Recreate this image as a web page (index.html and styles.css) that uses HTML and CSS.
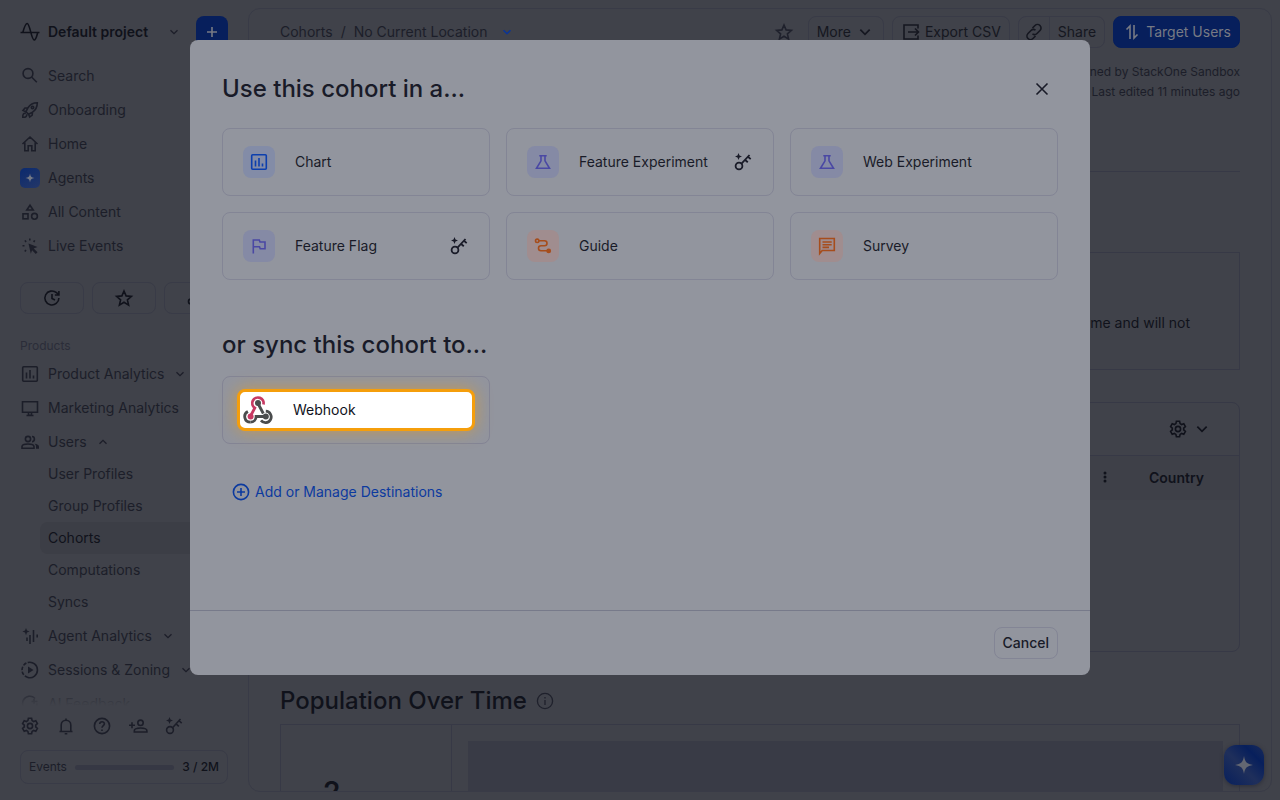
FILE: index.html
```html
<!DOCTYPE html>
<html lang="en">
<head>
    <meta charset="UTF-8">
    <meta name="viewport" content="width=device-width, initial-scale=1.0">
    <title>No Current Location - Cohorts</title>
    <link rel="stylesheet" href="styles.css">
</head>
<body>
    <!-- Shared icons -->
    <svg class="sprite" aria-hidden="true">
        <symbol id="chevron" viewBox="0 0 12 12"><path d="M2.5 4.2 6 7.7l3.500-3.500"/></symbol>
        <symbol id="chart" viewBox="0 0 20 20"><rect x="2.700" y="2.700" width="14.600" height="14.600" rx="1"/><path d="M6.500 8.500v6M10 6v8.500M13.500 11.500v3"/></symbol>
        <symbol id="flask" viewBox="0 0 20 20"><path d="M6.300 3.700h7.400M8 4v4.800L3.500 16.300h13L12 8.800V4"/></symbol>
        <symbol id="key" viewBox="0 0 20 20"><circle cx="6" cy="14" r="3.400"/><path d="M8.500 11.700 16.500 3M14.700 4.500l3 2.600M11.800 7.700l3 2.600"/><path class="solid" d="m5.500 1 1 2.500 2.500 1-2.500 1-1 2.500-1-2.500-2.500-1 2.500-1z"/></symbol>
        <symbol id="gear" viewBox="0 0 20 20"><path d="M8.400 2.300h3.200l.5 2.300 1.500.9 2.200-.8 1.600 2.800-1.700 1.600v1.800l1.700 1.600-1.600 2.800-2.200-.8-1.500.9-.5 2.300H8.400l-.5-2.300-1.500-.9-2.200.8-1.600-2.800 1.700-1.600V9.100L2.600 7.500l1.600-2.800 2.200.8 1.500-.9z"/><circle cx="10" cy="10" r="2.600"/></symbol>
        <symbol id="star" viewBox="0 0 20 20"><path d="m10 3 2.100 4.900 5.300.5-4 3.500 1.200 5.200-4.600-2.800-4.600 2.800 1.200-5.200-4-3.500 5.300-.5z"/></symbol>
        <symbol id="spark" viewBox="0 0 20 20"><path class="solid" d="M10 1c.9 6 2.900 8.100 9 9-6.100.9-8.100 3-9 9-.9-6-2.900-8.100-9-9 6.100-.9 8.100-3 9-9z"/></symbol>
    </svg>

    <div class="app">
        <aside class="sidebar">
            <div class="project">
                <button class="project-name">
                    <svg class="icon" viewBox="0 0 20 20"><path d="M.5 10.500h19M2.800 10.500C4.300 5 5.500 1.500 7.200 1.500c2.700 0 4.200 16.500 7 16.500 1.700 0 2.600-4 3.400-7"/></svg>
                    <span>Default project</span>
                    <svg class="chev"><use href="#chevron"/></svg>
                </button>
                <button class="add" aria-label="Create">
                    <svg class="icon-sm" viewBox="0 0 16 16"><path d="M8 3v10M3 8h10"/></svg>
                </button>
            </div>

            <nav class="nav">
                <a href="#"><svg class="icon" viewBox="0 0 20 20"><circle cx="8" cy="7.500" r="4.900"/><path d="m11.800 11.300 5 5"/></svg>Search</a>
                <a href="#"><svg class="icon" viewBox="0 0 20 20"><path d="M17.300 2.700c-4 0-7 1.400-9.300 5l-2 4 2.500 2.500 4-2c3.500-2.500 4.800-5.500 4.800-9.500zM8 7.700l-3 .2-2 2.500 3 1.300M12.500 12l-.3 3-2.500 2-1.200-3M5.800 13.500c-2-.8-3.300 1-3 3.800 2.800.2 4.500-1 3.800-3"/><circle cx="12.500" cy="7.500" r="1.200"/></svg>Onboarding</a>
                <a href="#"><svg class="icon" viewBox="0 0 20 20"><path d="M2.500 10 10 3l7.500 7M4.800 8.500v8.200h3.400v-5h3.600v5h3.400V8.500"/></svg>Home</a>
                <a href="#"><span class="agent-badge"><svg><use href="#spark"/></svg></span>Agents</a>
                <a href="#"><svg class="icon" viewBox="0 0 20 20"><path d="M10 3.200 13.200 8H6.800z"/><rect x="3" y="11.800" width="5" height="5"/><circle cx="14.500" cy="14.300" r="2.900"/></svg>All Content</a>
                <a href="#"><svg class="icon" viewBox="0 0 20 20"><path class="solid" d="m8.500 7.500 9 3.500-3.800 1.500 3.800 3.700-1.700 1.800-3.700-3.800-1.300 3.500z"/><path d="M9.800 2.500v2M5 4.300l1 1.700M14.700 4.300l-1 1.700M2.500 9.800h2M4.800 15.500 6 14"/></svg>Live Events</a>
            </nav>

            <div class="quick">
                <button aria-label="Recent"><svg class="icon" viewBox="0 0 20 20"><path d="M16.900 10A7 7 0 1 1 14.500 4.700l2 1.800M16.900 3v4h-4M10 6v4.500l3 1.500"/></svg></button>
                <button aria-label="Favorites"><svg class="icon"><use href="#star"/></svg></button>
                <button aria-label="Owned by me"><svg class="icon" viewBox="0 0 20 20"><circle cx="5" cy="13.500" r="2.500"/><circle cx="12" cy="6" r="2.500"/></svg></button>
            </div>

            <div class="products">
                <div class="label">Products</div>
                <nav class="nav">
                    <a href="#"><svg class="icon"><use href="#chart"/></svg>Product Analytics<svg class="chev"><use href="#chevron"/></svg></a>
                    <a href="#"><svg class="icon" viewBox="0 0 20 20"><path d="M2.500 3.700h15v10.500h-15zM8.500 14.500v2.800h3v-2.800M6.500 17.500h7"/></svg>Marketing Analytics</a>
                    <a href="#"><svg class="icon" viewBox="0 0 20 20"><circle cx="8" cy="7" r="2.600"/><path d="M2 16.200v-1.600c0-1.700 3.400-2.600 6-2.600s6 .9 6 2.600v1.600zM12 4.500c3.200 0 3.200 5.200 0 5.200"/><path class="solid" d="M14.500 11.800c2.600.3 4.500 1.300 4.500 3v2h-3v-2.500c0-1-.6-1.800-1.500-2.500z"/></svg>Users<svg class="chev up"><use href="#chevron"/></svg></a>
                    <div class="subnav">
                        <a href="#">User Profiles</a>
                        <a href="#">Group Profiles</a>
                        <a href="#" class="active">Cohorts</a>
                        <a href="#">Computations</a>
                        <a href="#">Syncs</a>
                    </div>
                    <a href="#"><svg class="icon" viewBox="0 0 20 20"><path d="M7 11.500v3.500M10 9v9M13.500 4v12M17.200 8.500v3"/><path class="solid" d="m6 2 1 2.600 2.600 1-2.600 1L6 9.200l-1-2.600-2.600-1 2.600-1z"/></svg>Agent Analytics<svg class="chev"><use href="#chevron"/></svg></a>
                    <a href="#"><svg class="icon" viewBox="0 0 20 20"><path d="M8 2.500a7.700 7.700 0 1 1 0 15"/><path stroke-dasharray="3.500 1.500" d="M8 17.500a7.700 7.700 0 0 1 0-15"/><path class="solid" d="m8 6.500 5.500 3.500L8 13.500z"/></svg>Sessions &amp; Zoning<svg class="chev"><use href="#chevron"/></svg></a>
                    <a href="#"><svg class="icon" viewBox="0 0 20 20"><path d="M15 4.500a7.200 7.200 0 1 0 2 5M14 5v5M11.500 7.500h6"/></svg>AI Feedback</a>
                </nav>
            </div>

            <div class="tools">
                <button aria-label="Settings"><svg class="icon"><use href="#gear"/></svg></button>
                <button aria-label="Notifications"><svg class="icon" viewBox="0 0 20 20"><path d="M3.500 15.500h13M5.200 15.500V9a4.800 4.800 0 0 1 9.600 0v6.500M10 2.500v2M8.700 17.700h2.600"/></svg></button>
                <button aria-label="Help"><svg class="icon" viewBox="0 0 20 20"><circle cx="10" cy="10" r="7.600"/><path d="M7.700 8c.2-3.200 4.800-2.800 4.700-.2 0 1.700-2.400 1.900-2.400 4M10 13.400V15"/></svg></button>
                <button aria-label="Invite"><svg class="icon" viewBox="0 0 20 20"><circle cx="12.500" cy="6.800" r="2.700"/><path d="M6.300 16v-1.300c0-3.600 12.600-3.600 12.600 0V16zM4 6.200v6M1 9.200h6"/></svg></button>
                <button aria-label="Upgrade"><svg class="icon"><use href="#key"/></svg></button>
            </div>

            <div class="usage">
                <span>Events</span>
                <span class="usage-bar"></span>
                <span class="usage-count">3 / 2M</span>
            </div>
        </aside>

        <main class="panel">
            <div class="topbar">
                <div class="crumbs">
                    <a href="#">Cohorts</a><span>/</span><a href="#">No Current Location</a>
                    <svg class="chev blue"><use href="#chevron"/></svg>
                </div>
                <div class="actions">
                    <button class="plain" aria-label="Favorite"><svg class="icon"><use href="#star"/></svg></button>
                    <button class="btn">More <svg class="chev-lg"><use href="#chevron"/></svg></button>
                    <button class="btn"><svg class="icon" viewBox="0 0 20 20"><path d="M17 6.500V3H3v14h14v-3.500M7 10h10M14 6.500l3.500 3.500-3.500 3.500"/></svg>Export CSV</button>
                    <div class="split">
                        <button aria-label="Copy link"><svg class="icon" viewBox="0 0 20 20"><path d="m8.500 6 2.500-2.500a3.400 3.400 0 0 1 5 5L13 11.500a3.400 3.400 0 0 1-4.500.3M11.500 14 9 16.500a3.400 3.400 0 0 1-5-5L7 8.500a3.400 3.400 0 0 1 4.500-.3"/></svg></button>
                        <button>Share</button>
                    </div>
                    <button class="btn primary"><svg class="icon" viewBox="0 0 20 20"><path d="M8 17V4L4.500 7.500M12 3v13l3.500-3.500"/></svg>Target Users</button>
                </div>
            </div>

            <div class="meta">
                <div>Owned by StackOne Sandbox</div>
                <div>Last edited 11 minutes ago</div>
            </div>

            <div class="notice">This cohort is static: it was captured at one time and will not</div>

            <section class="members">
                <div class="members-bar">
                    <button aria-label="Table settings"><svg class="icon"><use href="#gear"/></svg><svg class="chev-lg"><use href="#chevron"/></svg></button>
                </div>
                <table>
                    <thead>
                        <tr>
                            <th><svg class="dots" viewBox="0 0 4 12"><circle cx="2" cy="2" r="1.500"/><circle cx="2" cy="6" r="1.500"/><circle cx="2" cy="10" r="1.500"/></svg></th>
                            <th class="country">Country</th>
                        </tr>
                    </thead>
                </table>
            </section>

            <h2>Population Over Time <svg class="icon" viewBox="0 0 20 20"><circle cx="10" cy="10" r="7.600"/><path d="M10 9v5M10 6v1.500"/></svg></h2>
            <section class="population">
                <div class="count">2</div>
                <div class="plot"></div>
            </section>
        </main>
    </div>

    <button class="assistant" aria-label="Ask the assistant"><svg><use href="#spark"/></svg></button>

    <div class="overlay">
        <div class="modal" role="dialog" aria-labelledby="modal-title">
            <div class="modal-body">
                <div class="modal-head">
                    <h2 id="modal-title">Use this cohort in a...</h2>
                    <button aria-label="Close"><svg class="icon" viewBox="0 0 20 20"><path d="m4.500 4.500 11 11M15.500 4.500l-11 11"/></svg></button>
                </div>
                <div class="cards">
                    <button class="card"><span class="tile blue"><svg class="icon"><use href="#chart"/></svg></span>Chart</button>
                    <button class="card"><span class="tile violet"><svg class="icon"><use href="#flask"/></svg></span>Feature Experiment<svg class="icon key"><use href="#key"/></svg></button>
                    <button class="card"><span class="tile violet"><svg class="icon"><use href="#flask"/></svg></span>Web Experiment</button>
                    <button class="card"><span class="tile violet"><svg class="icon" viewBox="0 0 20 20"><path d="M4.300 17.500V4h6l.7 2h5v6.800h-4.800l-.7-2H4.500"/></svg></span>Feature Flag<svg class="icon key"><use href="#key"/></svg></button>
                    <button class="card"><span class="tile orange"><svg class="icon" viewBox="0 0 20 20"><circle cx="4.200" cy="4.800" r="1.700"/><path d="M6 4.800h5.500a2.500 2.500 0 0 1 0 5H8a2.500 2.500 0 0 0 0 5h6"/><circle class="solid" cx="15.700" cy="14.900" r="2.400"/></svg></span>Guide</button>
                    <button class="card"><span class="tile orange"><svg class="icon" viewBox="0 0 20 20"><path d="M2.700 17.500v-15h14.600v12H5.200zM5.500 6h9.200M5.500 8.700h9.200M5.500 11.400h6.500"/></svg></span>Survey</button>
                </div>

                <h2>or sync this cohort to...</h2>
                <div class="cards">
                    <button class="card sync">
                        <span class="spotlight">
                            <svg class="webhook" viewBox="0 0 30 30">
                                <path class="gray" d="M15 8.500 20.300 18.500M22.800 16.200a5.700 5.700 0 1 1-4.800 9.200M7.500 27.200a5.700 5.700 0 0 0 5.600-5.700h9"/>
                                <path class="gray" d="M7.500 27.200A5.700 5.700 0 0 1 4.900 16.400"/>
                                <path class="pink" d="M20.500 9.500A5.700 5.700 0 1 0 11.800 13L7.800 20.500"/>
                                <circle class="fill-gray" cx="15" cy="8" r="3"/>
                                <circle class="fill-pink" cx="7.600" cy="21.500" r="3"/>
                                <circle class="fill-gray" cx="22.800" cy="21.500" r="3"/>
                            </svg>
                            Webhook
                        </span>
                    </button>
                </div>
                <a href="#" class="manage"><svg class="icon" viewBox="0 0 20 20"><circle cx="10" cy="10" r="7.600"/><path d="M10 6v8M6 10h8"/></svg>Add or Manage Destinations</a>
            </div>
            <div class="modal-foot"><button class="cancel">Cancel</button></div>
        </div>
    </div>
</body>
</html>
```
FILE: styles.css
```css
* { box-sizing: border-box; }
body { font-family: Inter, sans-serif; font-size: 14px; line-height: 20px; font-weight: 400; margin: 0; background-color: #40424a; color: #1c1e29; overflow: hidden; }
button { font: inherit; color: inherit; background: none; border: none; padding: 0; cursor: pointer; }
a { color: inherit; text-decoration: none; }
h2 { margin: 0; font-size: 24px; line-height: 32px; font-weight: 500; }

/* icons */
svg { fill: none; stroke: currentColor; stroke-width: 1.6; flex: none; }
.sprite { position: absolute; width: 0; height: 0; }
.solid { fill: currentColor; stroke: none; }
.icon { width: 20px; height: 20px; }
.icon-sm { width: 16px; height: 16px; }
.chev { width: 12px; height: 12px; stroke-width: 1.3; }
.chev-lg { width: 20px; height: 16px; stroke-width: 1.3; }
.up { transform: rotate(180deg); }
.blue { color: #0b3596; }

.app { display: flex; height: 100vh; }

/* sidebar */
.sidebar { width: 248px; flex: none; display: flex; flex-direction: column; padding: 16px 20px; }
.project { display: flex; justify-content: space-between; gap: 16px; margin-bottom: 11px; }
.project-name { display: flex; flex: 1; align-items: center; gap: 8px; color: #10121b; font-weight: 600; }
.project-name .chev { margin-left: auto; color: #1c1e29; }
.add { display: flex; align-items: center; justify-content: center; width: 32px; height: 32px; border-radius: 8px; background: #071f5c; color: #777a84; }
.nav a { display: flex; align-items: center; gap: 8px; height: 34px; white-space: nowrap; }
.nav .chev { margin-left: 2px; }
.agent-badge { display: flex; align-items: center; justify-content: center; width: 20px; height: 20px; border-radius: 5px; background: linear-gradient(150deg, #0b2a6e, #243768); color: #747986; }
.agent-badge svg { width: 10px; height: 10px; }
.quick { display: flex; gap: 8px; margin: 19px 0 20px; color: #10121b; }
.quick button { flex: 1; display: flex; align-items: center; justify-content: center; height: 32px; border: 1px solid #393b47; border-radius: 8px; }
.products { position: relative; flex: 1; min-height: 0; overflow: hidden; }
.products::after { content: ""; position: absolute; inset: auto 0 0; height: 20px; background: linear-gradient(#40424a00, #40424a); }
.label { font-size: 12px; line-height: 23px; color: #2b2d39; }
.subnav { margin: -1px 0 1px 20px; }
.subnav a { height: 32px; padding-left: 8px; border-radius: 8px; }
.subnav .active { background: #3c3e46; color: #10121b; }
.tools { display: flex; gap: 16px; margin: 10px 0 14px; }
.tools button { display: flex; }
.usage { display: flex; align-items: center; gap: 8px; height: 34px; padding: 0 8px; border: 1px solid #393b47; border-radius: 8px; font-size: 12px; }
.usage-bar { flex: 1; height: 5px; border-radius: 3px; background: #363844; }
.usage-count { color: #10121b; font-weight: 500; }

/* page */
.panel { flex: 1; min-width: 0; margin: 8px 8px 8px 0; padding: 7px 31px 0; border: 1px solid #393b47; border-radius: 12px; overflow: hidden; }
.topbar { display: flex; align-items: center; justify-content: space-between; }
.crumbs { display: flex; align-items: center; gap: 8px; }
.crumbs .chev { margin-left: 6px; stroke-width: 1.6; }
.actions { display: flex; gap: 8px; color: #151720; }
.plain { display: flex; align-items: center; margin-right: 6px; color: #1f212c; }
.btn { display: flex; align-items: center; gap: 4px; height: 32px; padding: 0 8px; border: 1px solid #393b47; border-radius: 8px; }
.split { display: flex; border: 1px solid #393b47; border-radius: 8px; }
.split button { display: flex; align-items: center; padding: 0 8px; }
.split button:first-child { padding: 0 5px; border-right: 1px solid #393b47; }
.primary { background: #071f5c; border-color: #071f5c; color: #777a84; }
.meta { padding: 14px 0 69px; border-bottom: 1px solid #373946; text-align: right; font-size: 12px; }
.notice { margin-top: 80px; padding: 60px 49px 36px; border: 1px solid #373946; text-align: right; color: #10121b; }
.members { min-height: 250px; margin-top: 32px; border: 1px solid #373946; border-radius: 8px; color: #10121b; }
.members-bar { display: flex; justify-content: flex-end; align-items: center; height: 52px; padding-right: 27px; }
.members-bar button { display: flex; align-items: center; gap: 4px; }
.members table { width: 100%; border-collapse: collapse; border-top: 1px solid #373946; background: #3e4048; }
.members th { height: 44px; padding: 0; text-align: right; font-weight: 600; }
.members .country { width: 130px; padding-left: 40px; text-align: left; }
.dots { width: 4px; height: 12px; margin-right: 2px; fill: currentColor; stroke: none; }
.panel h2 { display: flex; align-items: center; gap: 8px; margin-top: 33px; color: #10121b; }
.panel h2 .icon { color: #1f212c; stroke-width: 1.3; }
.population { display: flex; height: 200px; margin-top: 7px; border: 1px solid #373946; }
.count { width: 171px; padding: 51px 0 0 42px; border-right: 1px solid #373946; color: #10121b; font-size: 28px; line-height: 32px; font-weight: 600; }
.plot { flex: 1; margin: 16px 16px 0; background: #393b46; }
.assistant { position: fixed; right: 16px; bottom: 15px; display: flex; align-items: center; justify-content: center; width: 40px; height: 40px; border-radius: 12px; background: linear-gradient(45deg, #071f5c, #1f2f5b 45%, #071f5c 75%, #1a2b58); color: #636772; box-shadow: 0 1px 4px #2b2d39; }
.assistant svg { width: 20px; height: 20px; }

/* modal */
.overlay { position: fixed; inset: 0; display: flex; justify-content: center; align-items: flex-start; padding: 40px; }
.modal { width: 100%; max-width: 900px; border-radius: 8px; background: #92959e; color: #191b28; }
.modal-body { min-height: 570px; padding: 33px 32px 32px; }
.modal-head { display: flex; align-items: center; justify-content: space-between; margin-bottom: 23px; }
.modal-head button { display: flex; padding: 6px; }
.cards { display: grid; grid-template-columns: repeat(3, 1fr); gap: 16px; }
.cards + h2 { margin: 49px 0 15px; }
.card { display: flex; align-items: center; gap: 20px; height: 68px; padding: 0 20px; border: 1px solid #838595; border-radius: 8px; text-align: left; }
.card .key { margin-left: auto; stroke-width: 1.8; }
.tile { display: flex; align-items: center; justify-content: center; width: 32px; height: 32px; border-radius: 8px; }
.tile.blue { background: #838ca7; color: #0c3fae; }
.tile.violet { background: #858aa5; color: #4a48a4; }
.tile.orange { background: #a08d8f; color: #a64d1c; }
.sync { padding: 0 14px; }
.spotlight { display: flex; flex: 1; align-items: center; gap: 20px; height: 42px; padding: 0 3px; border: 3px solid #f59e0b; border-radius: 8px; background: #fff; color: #10121b; box-shadow: 0 0 16px #f59e0b88; }
.webhook { width: 30px; height: 30px; stroke-width: 2.8; }
.webhook .gray { stroke: #4a4c4d; }
.webhook .pink { stroke: #c73a63; }
.fill-gray { fill: #4a4c4d; stroke: none; }
.fill-pink { fill: #c73a63; stroke: none; }
.manage { display: inline-flex; align-items: center; gap: 4px; margin: 38px 0 0 9px; color: #0c3a9f; }
.modal-foot { display: flex; justify-content: flex-end; padding: 16px 32px; border-top: 1px solid #777a8a; }
.cancel { height: 32px; padding: 0 8px; border: 1px solid #838595; border-radius: 8px; font-weight: 500; }
```
